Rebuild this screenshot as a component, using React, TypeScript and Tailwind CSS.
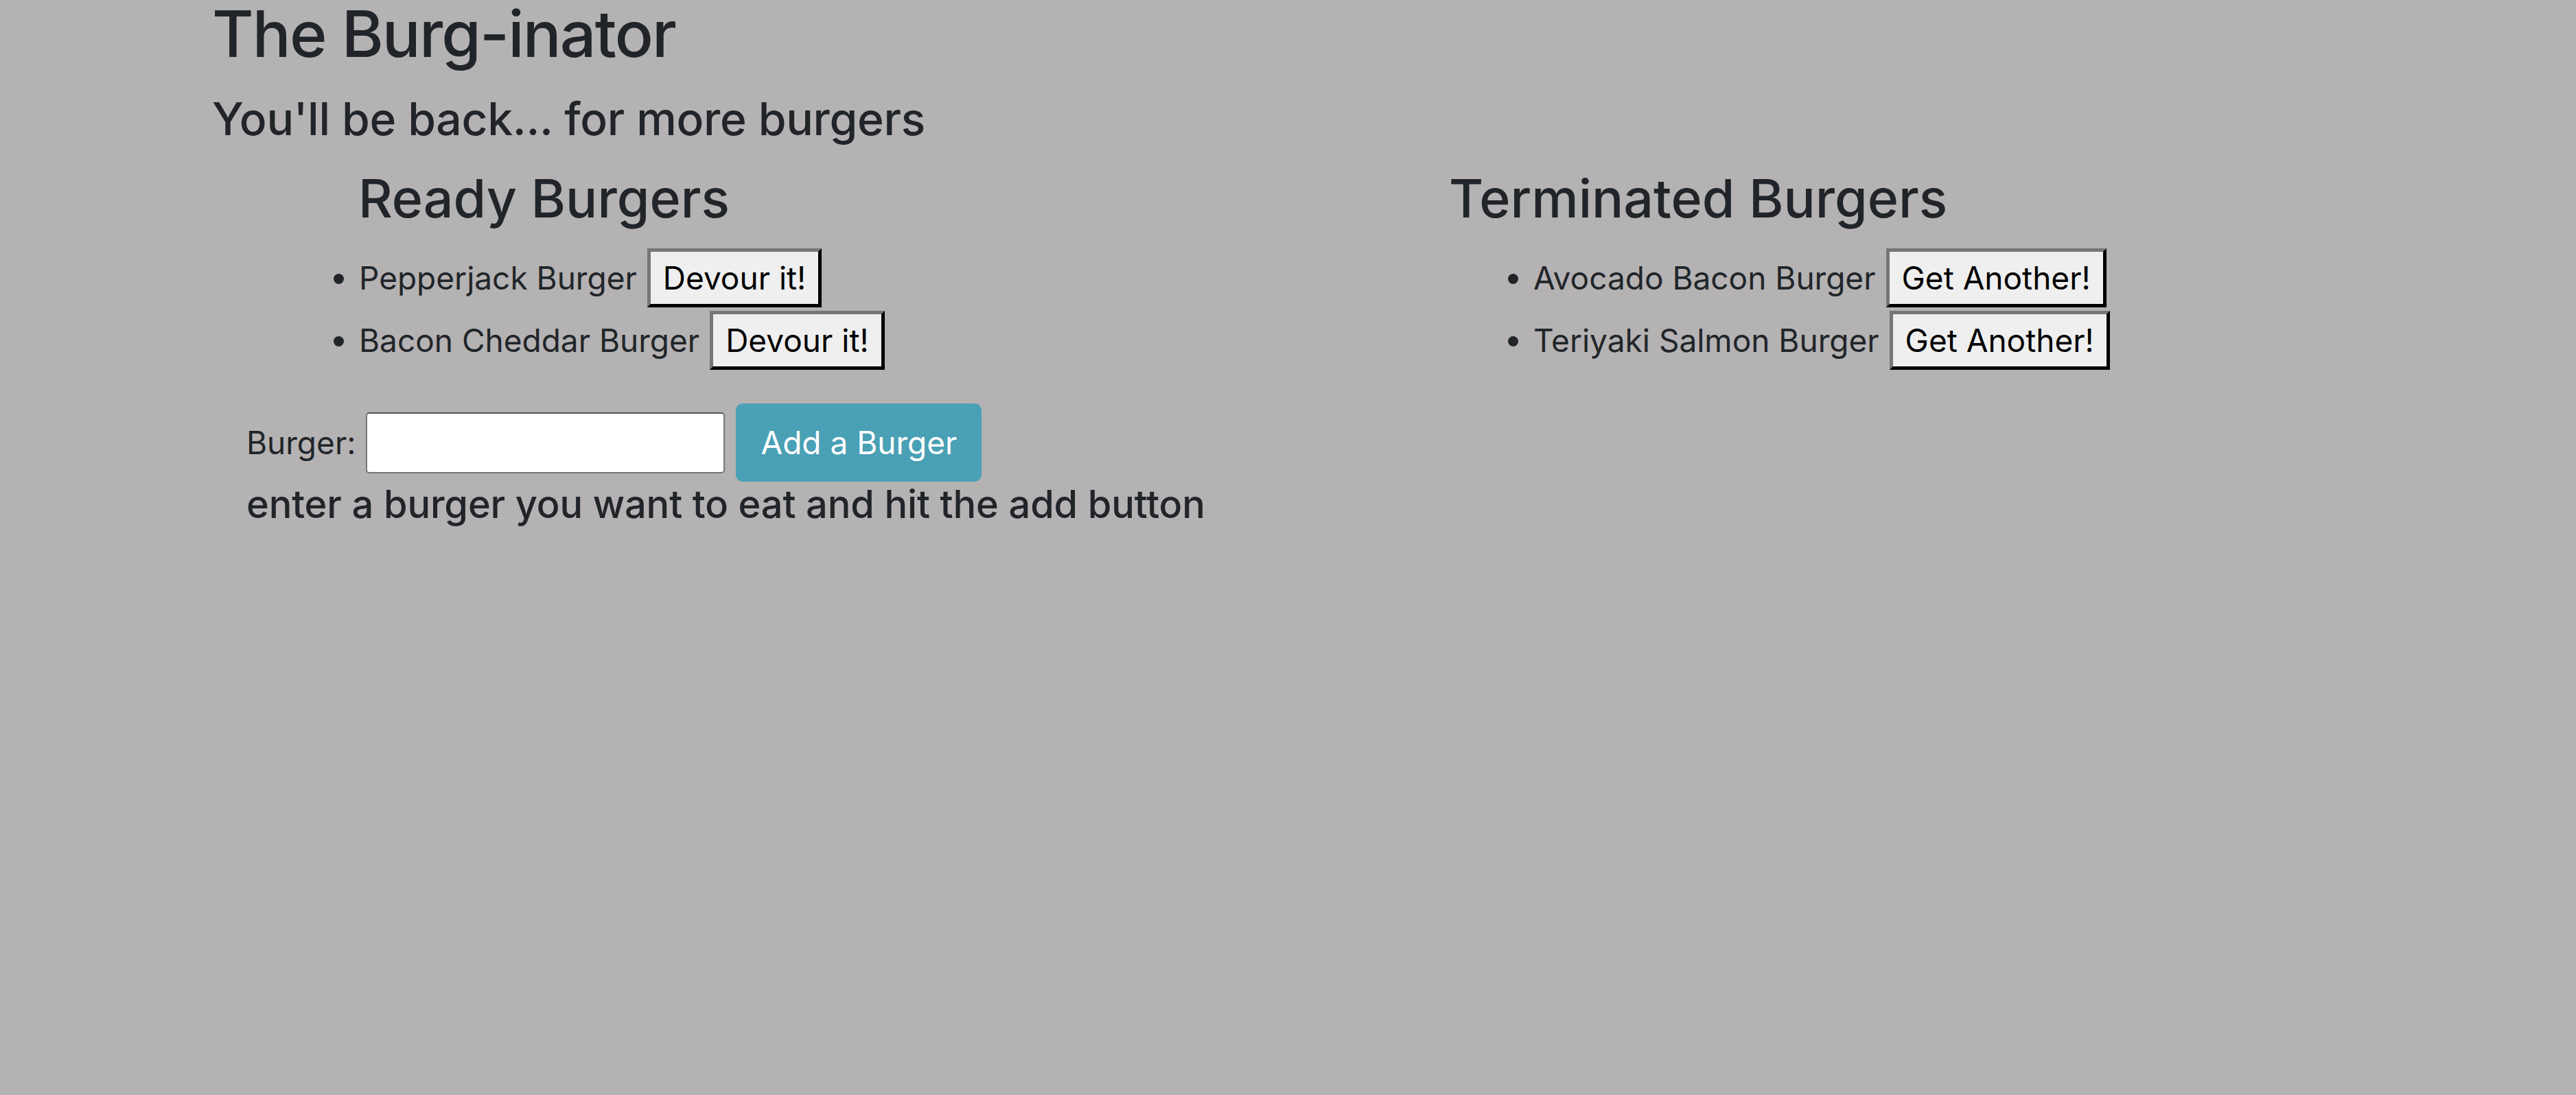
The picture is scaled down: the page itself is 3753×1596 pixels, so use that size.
import React from 'react';

const ready = ['Pepperjack Burger', 'Bacon Cheddar Burger'];
const eaten = ['Avocado Bacon Burger', 'Teriyaki Salmon Burger'];

const OldButton = ({ children }: { children: React.ReactNode }) => (
  <button className="ml-[15px] h-[86px] px-[18px] bg-[#efefef] text-black text-[46px] leading-none border-[5px] [border-style:outset] border-t-[#767676] border-l-[#767676] border-r-[#1e1e1e] border-b-[#1e1e1e]">
    {children}
  </button>
);

const BurgerList = ({ items, label }: { items: string[]; label: string }) => (
  <ul className="list-disc mt-[27px]">
    {items.map((item) => (
      <li key={item} className="h-[91px]">
        <div className="flex items-center h-[86px]">
          <span>{item}</span>
          <OldButton>{label}</OldButton>
        </div>
      </li>
    ))}
  </ul>
);

export default function App() {
  return (
    <div className="min-h-screen w-full bg-[#b4b2b3] text-[#212529] font-['Inter','Liberation_Sans',sans-serif] text-[46px]">
      {/* Header */}
      <div className="pl-[309px]">
        <h1 className="text-[93px] leading-[98px] font-medium tracking-[-0.02em]">The Burg-inator</h1>
        <h3 className="text-[66px] leading-[80px] font-medium mt-[35px] tracking-[-0.005em]">
          You'll be back... for more burgers
        </h3>
      </div>

      <div className="flex">
        {/* Ready column */}
        <div className="w-[2111px] pl-[359px]">
          <h2 className="ml-[163px] text-[77px] leading-[92px] font-medium mt-[30px]">Ready Burgers</h2>
          <div className="pl-[164px]">
            <BurgerList items={ready} label="Devour it!" />
          </div>

          <form className="mt-[44px]" onSubmit={(e) => e.preventDefault()}>
            <div className="flex items-center">
              <label htmlFor="burger">Burger:</label>
              <input
                id="burger"
                type="text"
                className="ml-[15px] w-[523px] h-[89px] bg-white border-2 border-[#767676] border-t-[#555] rounded-[5px]"
              />
              <button
                type="submit"
                className="ml-[16px] h-[114px] px-[36px] rounded-[10px] bg-[#4aa0b5] text-white text-[46px] leading-none"
              >
                Add a Burger
              </button>
            </div>
            <h5 className="text-[56px] font-medium leading-[67px] tracking-[-0.003em]">
              enter a burger you want to eat and hit the add button
            </h5>
          </form>
        </div>

        {/* Terminated column */}
        <div className="flex-1">
          <h2 className="text-[77px] leading-[92px] font-medium mt-[30px]">Terminated Burgers</h2>
          <div className="pl-[123px]">
            <BurgerList items={eaten} label="Get Another!" />
          </div>
        </div>
      </div>
    </div>
  );
}
